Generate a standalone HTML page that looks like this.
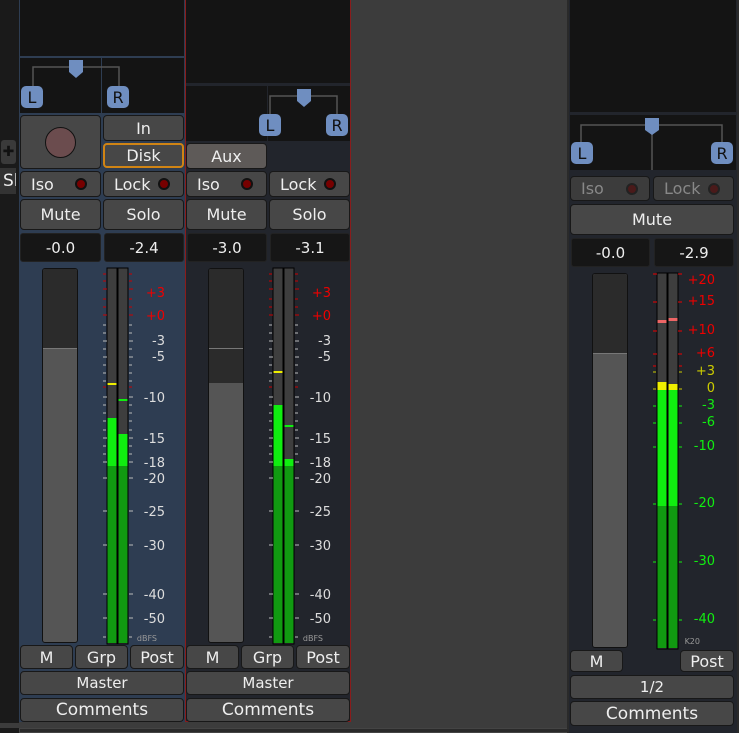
<!DOCTYPE html>
<html><head><meta charset="utf-8"><style>
*{box-sizing:border-box;margin:0;padding:0}
body{width:739px;height:733px;background:#3c3c3c;position:relative;overflow:hidden;font-family:"DejaVu Sans","Liberation Sans",sans-serif;}
.a{position:absolute}
.b{position:absolute;background:#474747;border:1px solid #181818;border-radius:4px;color:#eee;font-size:16px;text-align:center;display:flex;align-items:center;justify-content:center}
.g{position:absolute;background:#161616;border:1px solid #222;border-radius:3px;color:#eee;font-size:15px;display:flex;align-items:center;justify-content:center}
.led{position:absolute;width:12px;height:12px;border-radius:50%;background:#700;border:2px solid #111}
.lr{position:absolute;width:22px;height:22px;background:#6f8ec0;border-radius:5px;color:#111;font-size:16px;display:flex;align-items:center;justify-content:center}
svg text{font-family:"DejaVu Sans","Liberation Sans",sans-serif}
</style></head><body>
<!-- left edge -->
<div class="a" style="left:0;top:0;width:19px;height:733px;background:#1a1a1a"></div>
<div class="a" style="left:1px;top:140px;width:15px;height:24px;background:#3a3a3a;border-radius:3px;color:#111;font-size:14px;text-align:center;line-height:24px;font-weight:bold">✚</div>
<div class="a" style="left:0;top:168px;width:16px;height:26px;background:#333;color:#eee;font-size:17px;line-height:26px;padding-left:3px;overflow:hidden;white-space:nowrap">Sl</div>

<!-- strip 1 -->
<div class="a" style="left:19px;top:0;width:166px;height:722px;background:#2e3d52"></div>
<div class="a" style="left:20px;top:0;width:164px;height:56px;background:#141414"></div>
<div class="a" style="left:20px;top:58px;width:164px;height:55px;background:#141414"></div>
<div class="a" style="left:101px;top:58px;width:1px;height:55px;background:#2e3d52"></div>
<svg class="a" style="left:0;top:0" width="200" height="120"><path d="M33 88V67H119V88" stroke="#555" stroke-width="1.5" fill="none"/><path d="M69 60H83V72L76 78L69 72Z" fill="#6f8ec0"/></svg>
<div class="lr" style="left:21px;top:86px">L</div><div class="lr" style="left:107px;top:86px">R</div>
<div class="b" style="left:20px;top:115px;width:81px;height:54px"><div style="width:31px;height:31px;border-radius:50%;background:#6b4c4e;border:1px solid #111"></div></div>
<div class="b" style="left:103px;top:115px;width:81px;height:26px">In</div>
<div class="b" style="left:103px;top:143px;width:81px;height:25px;border:2px solid #d08414">Disk</div>
<div class="b" style="left:20px;top:171px;width:81px;height:26px;justify-content:flex-start;padding-left:10px">Iso</div><div class="led" style="left:75px;top:178px"></div>
<div class="b" style="left:103px;top:171px;width:81px;height:26px;justify-content:flex-start;padding-left:10px">Lock</div><div class="led" style="left:158px;top:178px"></div>
<div class="b" style="left:20px;top:199px;width:81px;height:31px">Mute</div>
<div class="b" style="left:103px;top:199px;width:81px;height:31px">Solo</div>
<div class="g" style="left:20px;top:233px;width:81px;height:29px">-0.0</div>
<div class="g" style="left:104px;top:233px;width:80px;height:29px">-2.4</div>
<div class="a" style="left:42px;top:268px;width:36px;height:375px;background:#555;border:1px solid #111;border-radius:3px;overflow:hidden"><div style="height:80px;background:#2b2b2b;border-bottom:1px solid #777"></div></div>
<svg class="a" style="left:100px;top:266px" width="84" height="380">
<rect x="7" y="2" width="10" height="376" fill="#3e3e3e" stroke="#000"/><rect x="18" y="2" width="10" height="376" fill="#3e3e3e" stroke="#000"/>
<rect x="7.5" y="152" width="9" height="48" fill="#10ee10"/><rect x="7.5" y="200" width="9" height="177" fill="#119a11"/>
<rect x="18.5" y="168" width="9" height="32" fill="#10ee10"/><rect x="18.5" y="200" width="9" height="177" fill="#119a11"/>
<rect x="7.5" y="117" width="9" height="2" fill="#ee0"/><rect x="18.5" y="133" width="9" height="2" fill="#1e1"/>
<g stroke="#c00" stroke-width="1"><path d="M3 8h3M29 8h3M3 15h3M29 15h3M3 23h4M29 23h4M3 33h3M29 33h3M3 41h3M29 41h3M3 49h4M29 49h4M3 121h3M29 121h3"/></g>
<g stroke="#bbb" stroke-width="1"><path d="M3 59h3M29 59h3M3 67h3M29 67h3M3 75h4M29 75h4M3 83h3M29 83h3M3 91h4M29 91h4M3 99h3M29 99h3M3 107h3M29 107h3M3 115h3M29 115h3M3 131h4M29 131h4M3 139h3M29 139h3M3 147h3M29 147h3M3 155h3M29 155h3M3 164h3M29 164h3M3 172h4M29 172h4M3 180h3M29 180h3M3 188h3M29 188h3M3 196h4M29 196h4M3 212h4M29 212h4M3 245h4M29 245h4M3 279h4M29 279h4M3 328h4M29 328h4M3 352h4M29 352h4M3 371h3M29 371h3"/></g>
<g font-size="13" text-anchor="end" fill="#ddd"><text x="65" y="31" fill="#e00">+3</text><text x="65" y="54" fill="#e00">+0</text><text x="65" y="79">-3</text><text x="65" y="95">-5</text><text x="65" y="136">-10</text><text x="65" y="177">-15</text><text x="65" y="201">-18</text><text x="65" y="217">-20</text><text x="65" y="250">-25</text><text x="65" y="284">-30</text><text x="65" y="333">-40</text><text x="65" y="357">-50</text><text x="57" y="375" font-size="8" fill="#999">dBFS</text></g>
</svg>
<div class="b" style="left:20px;top:645px;width:53px;height:24px">M</div>
<div class="b" style="left:75px;top:645px;width:53px;height:24px">Grp</div>
<div class="b" style="left:130px;top:645px;width:54px;height:24px">Post</div>
<div class="b" style="left:20px;top:671px;width:164px;height:24px;font-size:15px">Master</div>
<div class="b" style="left:20px;top:698px;width:164px;height:24px;font-size:17px">Comments</div>

<!-- strip 2 -->
<div class="a" style="left:185px;top:0;width:166px;height:722px;background:#22252c;border-left:1px solid #8a1c1c;border-right:1px solid #8a1c1c;border-bottom:1px solid #8a1c1c"></div>
<div class="a" style="left:186px;top:0;width:164px;height:83px;background:#141414"></div>
<div class="a" style="left:186px;top:86px;width:164px;height:55px;background:#141414"></div>
<div class="a" style="left:267px;top:86px;width:1px;height:55px;background:#22252c"></div>
<svg class="a" style="left:180px;top:80px" width="180" height="70"><path d="M90 38V16H157V38" stroke="#555" stroke-width="1.5" fill="none"/><path d="M117 9H131V21L124 27L117 21Z" fill="#6f8ec0"/></svg>
<div class="lr" style="left:259px;top:114px">L</div><div class="lr" style="left:326px;top:114px">R</div>
<div class="b" style="left:186px;top:143px;width:81px;height:26px;background:#5e5a58">Aux</div>
<div class="b" style="left:186px;top:171px;width:81px;height:26px;justify-content:flex-start;padding-left:10px">Iso</div><div class="led" style="left:241px;top:178px"></div>
<div class="b" style="left:269px;top:171px;width:81px;height:26px;justify-content:flex-start;padding-left:10px">Lock</div><div class="led" style="left:324px;top:178px"></div>
<div class="b" style="left:186px;top:199px;width:81px;height:31px">Mute</div>
<div class="b" style="left:269px;top:199px;width:81px;height:31px">Solo</div>
<div class="g" style="left:187px;top:233px;width:80px;height:29px">-3.0</div>
<div class="g" style="left:270px;top:233px;width:80px;height:29px">-3.1</div>
<div class="a" style="left:208px;top:268px;width:36px;height:375px;background:#555;border:1px solid #111;border-radius:3px;overflow:hidden"><div style="height:80px;background:#2b2b2b;border-bottom:1px solid #777"></div><div style="height:34px;background:#2b2b2b"></div></div>
<svg class="a" style="left:266px;top:266px" width="84" height="380">
<rect x="7" y="2" width="10" height="376" fill="#3e3e3e" stroke="#000"/><rect x="18" y="2" width="10" height="376" fill="#3e3e3e" stroke="#000"/>
<rect x="7.5" y="139" width="9" height="61" fill="#10ee10"/><rect x="7.5" y="200" width="9" height="177" fill="#119a11"/>
<rect x="18.5" y="193" width="9" height="7" fill="#10ee10"/><rect x="18.5" y="200" width="9" height="177" fill="#119a11"/>
<rect x="7.5" y="105" width="9" height="2" fill="#ee0"/><rect x="18.5" y="159" width="9" height="2" fill="#1e1"/>
<g stroke="#c00" stroke-width="1"><path d="M3 8h3M29 8h3M3 15h3M29 15h3M3 23h4M29 23h4M3 33h3M29 33h3M3 41h3M29 41h3M3 49h4M29 49h4M3 121h3M29 121h3"/></g>
<g stroke="#bbb" stroke-width="1"><path d="M3 59h3M29 59h3M3 67h3M29 67h3M3 75h4M29 75h4M3 83h3M29 83h3M3 91h4M29 91h4M3 99h3M29 99h3M3 107h3M29 107h3M3 115h3M29 115h3M3 131h4M29 131h4M3 139h3M29 139h3M3 147h3M29 147h3M3 155h3M29 155h3M3 164h3M29 164h3M3 172h4M29 172h4M3 180h3M29 180h3M3 188h3M29 188h3M3 196h4M29 196h4M3 212h4M29 212h4M3 245h4M29 245h4M3 279h4M29 279h4M3 328h4M29 328h4M3 352h4M29 352h4M3 371h3M29 371h3"/></g>
<g font-size="13" text-anchor="end" fill="#ddd"><text x="65" y="31" fill="#e00">+3</text><text x="65" y="54" fill="#e00">+0</text><text x="65" y="79">-3</text><text x="65" y="95">-5</text><text x="65" y="136">-10</text><text x="65" y="177">-15</text><text x="65" y="201">-18</text><text x="65" y="217">-20</text><text x="65" y="250">-25</text><text x="65" y="284">-30</text><text x="65" y="333">-40</text><text x="65" y="357">-50</text><text x="57" y="375" font-size="8" fill="#999">dBFS</text></g>
</svg>
<div class="b" style="left:186px;top:645px;width:53px;height:24px">M</div>
<div class="b" style="left:241px;top:645px;width:53px;height:24px">Grp</div>
<div class="b" style="left:296px;top:645px;width:54px;height:24px">Post</div>
<div class="b" style="left:186px;top:671px;width:164px;height:24px;font-size:15px">Master</div>
<div class="b" style="left:186px;top:698px;width:164px;height:24px;font-size:17px">Comments</div>

<!-- bottom bars -->
<div class="a" style="left:0;top:723px;width:568px;height:5px;background:#3c3c3c"></div>
<div class="a" style="left:19px;top:728px;width:549px;height:5px;background:#2a2a2a;border:1px solid #444"></div>

<!-- master strip -->
<div class="a" style="left:567px;top:0;width:172px;height:733px;background:#2a2a2a"></div>
<div class="a" style="left:569px;top:0;width:168px;height:733px;background:#22252c"></div>
<div class="a" style="left:570px;top:0;width:166px;height:112px;background:#141414"></div>
<div class="a" style="left:570px;top:115px;width:166px;height:55px;background:#141414"></div>
<svg class="a" style="left:560px;top:110px" width="179" height="62"><path d="M21 33V15H162V33M92 15V60" stroke="#555" stroke-width="1.5" fill="none"/><path d="M85 8H99V20L92 25L85 20Z" fill="#6f8ec0"/></svg>
<div class="lr" style="left:571px;top:142px">L</div><div class="lr" style="left:711px;top:142px">R</div>
<div class="b" style="left:570px;top:176px;width:80px;height:25px;background:#3c3c3c;color:#888;justify-content:flex-start;padding-left:10px">Iso</div><div class="led" style="left:626px;top:183px;background:#4a1a1a;border-color:#222"></div>
<div class="b" style="left:653px;top:176px;width:81px;height:25px;background:#3c3c3c;color:#888;justify-content:flex-start;padding-left:10px">Lock</div><div class="led" style="left:708px;top:183px;background:#4a1a1a;border-color:#222"></div>
<div class="b" style="left:570px;top:204px;width:164px;height:31px">Mute</div>
<div class="g" style="left:571px;top:238px;width:79px;height:29px">-0.0</div>
<div class="g" style="left:654px;top:238px;width:80px;height:29px">-2.9</div>
<div class="a" style="left:592px;top:273px;width:36px;height:375px;background:#555;border:1px solid #111;border-radius:3px;overflow:hidden"><div style="height:80px;background:#2b2b2b;border-bottom:1px solid #777"></div></div>
<svg class="a" style="left:650px;top:271px" width="89" height="380">
<rect x="7" y="2" width="10" height="376" fill="#3e3e3e" stroke="#000"/><rect x="18" y="2" width="10" height="376" fill="#3e3e3e" stroke="#000"/>
<rect x="7.5" y="111" width="9" height="8" fill="#ee0"/><rect x="7.5" y="119" width="9" height="116" fill="#10ee10"/><rect x="7.5" y="235" width="9" height="142" fill="#119a11"/>
<rect x="18.5" y="113" width="9" height="6" fill="#ee0"/><rect x="18.5" y="119" width="9" height="116" fill="#10ee10"/><rect x="18.5" y="235" width="9" height="142" fill="#119a11"/>
<rect x="7.5" y="49" width="9" height="3" fill="#e66"/><rect x="18.5" y="47" width="9" height="3" fill="#e66"/>
<g stroke="#e00"><path d="M3 3h4M28 3h4M3 31h4M28 31h4M3 60h4M28 60h4M3 83h4M28 83h4M3 95h3M29 95h3"/></g>
<g stroke="#cc0"><path d="M3 101h3M29 101h3M3 118h3M29 118h3"/></g>
<g stroke="#1e1"><path d="M3 135h3M29 135h3M3 152h3M29 152h3M3 176h3M29 176h3M3 233h3M29 233h3M3 291h3M29 291h3M3 349h3M29 349h3"/></g>
<g font-size="13" text-anchor="end"><g fill="#e00"><text x="65" y="13">+20</text><text x="65" y="34">+15</text><text x="65" y="63">+10</text><text x="65" y="86">+6</text></g><g fill="#cc0"><text x="65" y="104">+3</text><text x="65" y="121">0</text></g><g fill="#1e1"><text x="65" y="138">-3</text><text x="65" y="155">-6</text><text x="65" y="179">-10</text><text x="65" y="236">-20</text><text x="65" y="294">-30</text><text x="65" y="352">-40</text></g><text x="50" y="373" font-size="8" fill="#999">K20</text></g>
</svg>
<div class="b" style="left:570px;top:650px;width:53px;height:22px">M</div>
<div class="b" style="left:680px;top:650px;width:54px;height:22px">Post</div>
<div class="b" style="left:570px;top:675px;width:164px;height:24px;font-size:15px">1/2</div>
<div class="b" style="left:570px;top:701px;width:164px;height:25px;font-size:17px">Comments</div>
</body></html>
